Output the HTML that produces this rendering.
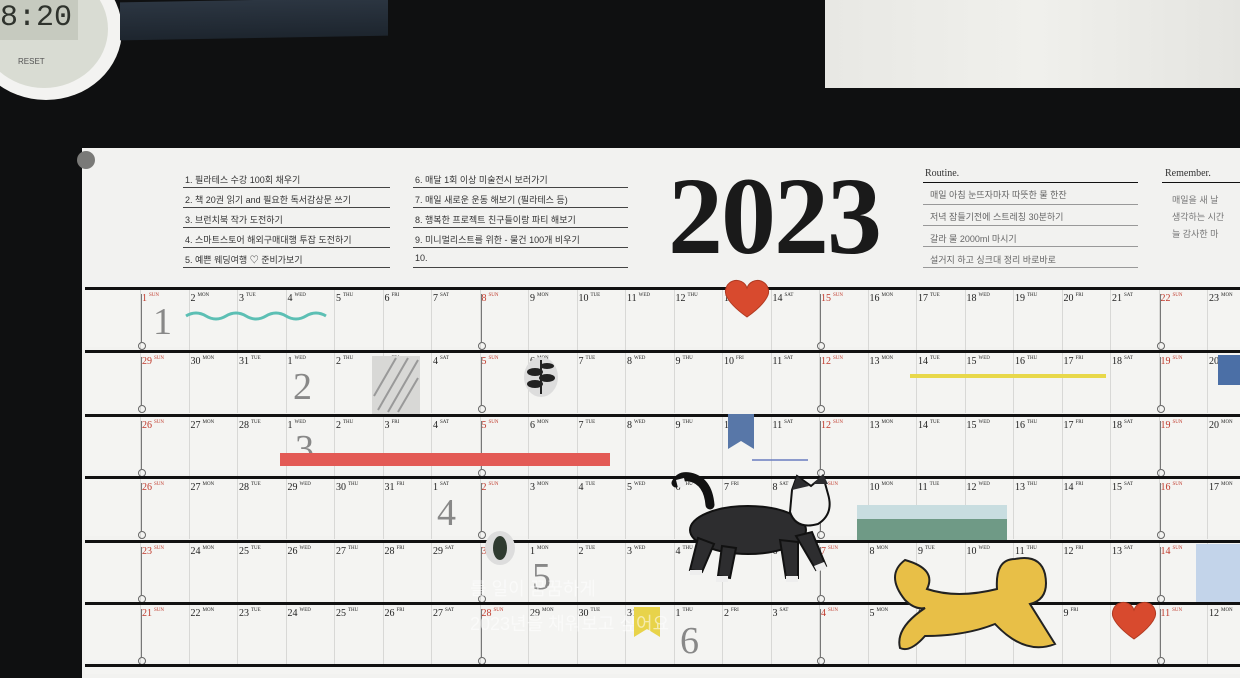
<!DOCTYPE html>
<html><head><meta charset="utf-8"><style>
*{margin:0;padding:0;box-sizing:border-box}
body{width:1240px;height:669px;background:#0f1011;overflow:hidden;position:relative;font-family:"Liberation Serif","Noto Serif CJK SC",serif}
.abs{position:absolute}
.paper{position:absolute;left:82px;top:148px;width:1180px;height:530px;background:#f2f2f0}
.row{position:absolute;left:85px;width:1160px;height:60px;background:#f4f4f2;border-top:3px solid #111}
.cells{position:absolute;left:55px;top:0;display:flex}
.cells i{font-style:normal;display:block;width:48.5px;height:60px;border-left:1px solid #d8d8d6;font-size:10px;color:#222;padding:3px 0 0 1px;position:relative}
.cells i b{font-size:5px;font-weight:normal;vertical-align:top;margin-left:2px}
.cells i.s{color:#c0392b}
.cells i.s:after{content:"";position:absolute;left:0;top:4px;width:1px;height:48px;background:#777}
.cells i.s:before{content:"";position:absolute;left:-3px;top:52px;width:6px;height:6px;border:1px solid #666;border-radius:50%}
.big{position:absolute;font-size:38px;color:#888;font-family:"Liberation Serif",serif}
.hl{position:absolute;height:1px;background:#444}
.ht{position:absolute;font-family:"Liberation Sans","Noto Sans CJK KR",sans-serif;font-size:9px;color:#333}
</style></head><body>
<!-- timer -->
<div class="abs" style="left:-30px;top:-40px;width:152px;height:140px;border-radius:50%;background:#f3f3f1"></div>
<div class="abs" style="left:-20px;top:-30px;width:128px;height:118px;border-radius:50%;background:#d9dcd3"></div>
<div class="abs" style="left:0;top:0;width:78px;height:40px;background:#c6cabf;font-family:'Liberation Mono',monospace;font-size:30px;color:#2f332d;line-height:36px">8:20</div>
<div class="abs" style="left:18px;top:57px;font-family:'Liberation Sans',sans-serif;font-size:8px;color:#555">RESET</div>
<!-- sea photo -->
<div class="abs" style="left:120px;top:0;width:268px;height:38px;background:linear-gradient(#2c3642,#1d252e);transform:skewY(-1deg)"></div>
<!-- towel -->
<div class="abs" style="left:825px;top:0;width:420px;height:88px;background:linear-gradient(90deg,#e8e8e4,#f0f0ec,#e4e4e0)"></div>
<div class="paper"></div>
<div class="abs" style="left:77px;top:151px;width:18px;height:18px;border-radius:50%;background:#7a7a78"></div>
<!-- header list -->
<div class="ht" style="left:185px;top:173px">1. 필라테스 수강 100회 채우기</div>
<div class="ht" style="left:185px;top:193px">2. 책 20권 읽기 and 필요한 독서감상문 쓰기</div>
<div class="ht" style="left:185px;top:213px">3. 브런치북 작가 도전하기</div>
<div class="ht" style="left:185px;top:233px">4. 스마트스토어 해외구매대행 투잡 도전하기</div>
<div class="ht" style="left:185px;top:253px">5. 예쁜 웨딩여행 ♡ 준비가보기</div>
<div class="ht" style="left:415px;top:173px">6. 매달 1회 이상 미술전시 보러가기</div>
<div class="ht" style="left:415px;top:193px">7. 매일 새로운 운동 해보기 (필라테스 등)</div>
<div class="ht" style="left:415px;top:213px">8. 행복한 프로젝트 친구들이랑 파티 해보기</div>
<div class="ht" style="left:415px;top:233px">9. 미니멀리스트를 위한 - 물건 100개 비우기</div>
<div class="ht" style="left:415px;top:253px">10.</div>
<div class="hl" style="left:183px;top:187px;width:207px"></div><div class="hl" style="left:183px;top:207px;width:207px"></div><div class="hl" style="left:183px;top:227px;width:207px"></div><div class="hl" style="left:183px;top:247px;width:207px"></div><div class="hl" style="left:183px;top:267px;width:207px"></div>
<div class="hl" style="left:413px;top:187px;width:215px"></div><div class="hl" style="left:413px;top:207px;width:215px"></div><div class="hl" style="left:413px;top:227px;width:215px"></div><div class="hl" style="left:413px;top:247px;width:215px"></div><div class="hl" style="left:413px;top:267px;width:215px"></div>
<div class="abs" style="left:668px;top:160px;font-size:110px;font-weight:bold;color:#1a1a1a;letter-spacing:-2px;line-height:112px">2023</div>
<div class="ht" style="left:925px;top:168px;font-family:'Liberation Serif',serif;font-size:10px">Routine.</div>
<div class="ht" style="left:1165px;top:168px;font-family:'Liberation Serif',serif;font-size:10px">Remember.</div>
<div class="hl" style="left:923px;top:182px;width:215px;background:#111"></div>
<div class="hl" style="left:1162px;top:182px;width:80px;background:#111"></div>
<div class="ht" style="left:930px;top:188px;color:#666">매일 아침 눈뜨자마자 따뜻한 물 한잔</div>
<div class="hl" style="left:923px;top:204px;width:215px;background:#999"></div>
<div class="ht" style="left:930px;top:210px;color:#666">저녁 잠들기전에 스트레칭 30분하기</div>
<div class="hl" style="left:923px;top:225px;width:215px;background:#999"></div>
<div class="ht" style="left:930px;top:232px;color:#666">갈라 물 2000ml 마시기</div>
<div class="hl" style="left:923px;top:246px;width:215px;background:#999"></div>
<div class="ht" style="left:930px;top:253px;color:#666">설거지 하고 싱크대 정리 바로바로</div>
<div class="hl" style="left:923px;top:267px;width:215px;background:#999"></div>
<div class="ht" style="left:1172px;top:192px;color:#777;line-height:17px">매일을 새 날<br>생각하는 시간<br>늘 감사한 마</div>

<div class="row" style="top:287px"><div class="cells"><i class="s">1<b>SUN</b></i><i>2<b>MON</b></i><i>3<b>TUE</b></i><i>4<b>WED</b></i><i>5<b>THU</b></i><i>6<b>FRI</b></i><i>7<b>SAT</b></i><i class="s">8<b>SUN</b></i><i>9<b>MON</b></i><i>10<b>TUE</b></i><i>11<b>WED</b></i><i>12<b>THU</b></i><i>13<b>FRI</b></i><i>14<b>SAT</b></i><i class="s">15<b>SUN</b></i><i>16<b>MON</b></i><i>17<b>TUE</b></i><i>18<b>WED</b></i><i>19<b>THU</b></i><i>20<b>FRI</b></i><i>21<b>SAT</b></i><i class="s">22<b>SUN</b></i><i>23<b>MON</b></i></div><div class="big" style="left:68px;top:10px">1</div></div>
<div class="row" style="top:350px"><div class="cells"><i class="s">29<b>SUN</b></i><i>30<b>MON</b></i><i>31<b>TUE</b></i><i>1<b>WED</b></i><i>2<b>THU</b></i><i>3<b>FRI</b></i><i>4<b>SAT</b></i><i class="s">5<b>SUN</b></i><i>6<b>MON</b></i><i>7<b>TUE</b></i><i>8<b>WED</b></i><i>9<b>THU</b></i><i>10<b>FRI</b></i><i>11<b>SAT</b></i><i class="s">12<b>SUN</b></i><i>13<b>MON</b></i><i>14<b>TUE</b></i><i>15<b>WED</b></i><i>16<b>THU</b></i><i>17<b>FRI</b></i><i>18<b>SAT</b></i><i class="s">19<b>SUN</b></i><i>20<b>MON</b></i></div><div class="big" style="left:208px;top:12px">2</div></div>
<div class="row" style="top:414px"><div class="cells"><i class="s">26<b>SUN</b></i><i>27<b>MON</b></i><i>28<b>TUE</b></i><i>1<b>WED</b></i><i>2<b>THU</b></i><i>3<b>FRI</b></i><i>4<b>SAT</b></i><i class="s">5<b>SUN</b></i><i>6<b>MON</b></i><i>7<b>TUE</b></i><i>8<b>WED</b></i><i>9<b>THU</b></i><i>10<b>FRI</b></i><i>11<b>SAT</b></i><i class="s">12<b>SUN</b></i><i>13<b>MON</b></i><i>14<b>TUE</b></i><i>15<b>WED</b></i><i>16<b>THU</b></i><i>17<b>FRI</b></i><i>18<b>SAT</b></i><i class="s">19<b>SUN</b></i><i>20<b>MON</b></i></div><div class="big" style="left:210px;top:10px">3</div></div>
<div class="row" style="top:476px"><div class="cells"><i class="s">26<b>SUN</b></i><i>27<b>MON</b></i><i>28<b>TUE</b></i><i>29<b>WED</b></i><i>30<b>THU</b></i><i>31<b>FRI</b></i><i>1<b>SAT</b></i><i class="s">2<b>SUN</b></i><i>3<b>MON</b></i><i>4<b>TUE</b></i><i>5<b>WED</b></i><i>6<b>THU</b></i><i>7<b>FRI</b></i><i>8<b>SAT</b></i><i class="s">9<b>SUN</b></i><i>10<b>MON</b></i><i>11<b>TUE</b></i><i>12<b>WED</b></i><i>13<b>THU</b></i><i>14<b>FRI</b></i><i>15<b>SAT</b></i><i class="s">16<b>SUN</b></i><i>17<b>MON</b></i></div><div class="big" style="left:352px;top:12px">4</div></div>
<div class="row" style="top:540px"><div class="cells"><i class="s">23<b>SUN</b></i><i>24<b>MON</b></i><i>25<b>TUE</b></i><i>26<b>WED</b></i><i>27<b>THU</b></i><i>28<b>FRI</b></i><i>29<b>SAT</b></i><i class="s">30<b>SUN</b></i><i>1<b>MON</b></i><i>2<b>TUE</b></i><i>3<b>WED</b></i><i>4<b>THU</b></i><i>5<b>FRI</b></i><i>6<b>SAT</b></i><i class="s">7<b>SUN</b></i><i>8<b>MON</b></i><i>9<b>TUE</b></i><i>10<b>WED</b></i><i>11<b>THU</b></i><i>12<b>FRI</b></i><i>13<b>SAT</b></i><i class="s">14<b>SUN</b></i><i>15<b>MON</b></i></div><div class="big" style="left:447px;top:12px">5</div></div>
<div class="row" style="top:602px"><div class="cells"><i class="s">21<b>SUN</b></i><i>22<b>MON</b></i><i>23<b>TUE</b></i><i>24<b>WED</b></i><i>25<b>THU</b></i><i>26<b>FRI</b></i><i>27<b>SAT</b></i><i class="s">28<b>SUN</b></i><i>29<b>MON</b></i><i>30<b>TUE</b></i><i>31<b>WED</b></i><i>1<b>THU</b></i><i>2<b>FRI</b></i><i>3<b>SAT</b></i><i class="s">4<b>SUN</b></i><i>5<b>MON</b></i><i>6<b>TUE</b></i><i>7<b>WED</b></i><i>8<b>THU</b></i><i>9<b>FRI</b></i><i>10<b>SAT</b></i><i class="s">11<b>SUN</b></i><i>12<b>MON</b></i></div><div class="big" style="left:595px;top:14px">6</div></div>
<div class="row" style="top:664px;height:10px"></div>

<!-- decorations -->
<svg class="abs" style="left:0;top:0" width="1240" height="669">
<path d="M186 316 q10 -6 20 0 t20 0 t20 0 t20 0 t20 0 t20 0 t20 0" stroke="#5cbfb4" stroke-width="3" fill="none"/>
<rect x="372" y="356" width="48" height="58" fill="#d8d8d6"/>
<path d="M378 410 l30 -52 M388 412 l30 -52 M374 396 l22 -38 M398 412 l20 -34" stroke="#999" stroke-width="2"/>
<ellipse cx="541" cy="377" rx="17" ry="20" fill="#ddd"/>
<path d="M541 360 l0 34" stroke="#222" stroke-width="2"/><ellipse cx="535" cy="372" rx="8" ry="4" fill="#222"/><ellipse cx="547" cy="378" rx="8" ry="4" fill="#222"/><ellipse cx="535" cy="384" rx="8" ry="4" fill="#222"/><ellipse cx="547" cy="366" rx="7" ry="3" fill="#222"/>
<rect x="910" y="374" width="196" height="4" fill="#e8d84a"/>
<rect x="1218" y="355" width="22" height="30" fill="#4b6fa6"/>
<rect x="280" y="453" width="330" height="13" fill="#e35a55"/>
<path d="M728 414 h26 v35 l-13 -8 l-13 8z" fill="#5877a8"/>
<path d="M752 460 h56" stroke="#6a7dc0" stroke-width="1.5"/>
<path d="M726 295 a11 11 0 0 1 21 -7 a11 11 0 0 1 21 7 q-4 10 -21 22 q-17 -12 -21 -22z" fill="#d84a2e" stroke="#b03a22"/>
<path d="M1113 617 a11 11 0 0 1 21 -7 a11 11 0 0 1 21 7 q-4 10 -21 22 q-17 -12 -21 -22z" fill="#d84a2e" stroke="#b03a22"/>
<rect x="857" y="505" width="150" height="35" fill="#6f9a86"/><rect x="857" y="505" width="150" height="14" fill="#c8dde0"/>
<ellipse cx="500" cy="548" rx="15" ry="17" fill="#ddd"/><ellipse cx="500" cy="548" rx="7" ry="12" fill="#2f3b30"/>
<path d="M634 607 h26 v30 l-13 -8 l-13 8z" fill="#e8d34a"/>
<rect x="1196" y="544" width="44" height="58" fill="#c3d4ea"/>
<!-- cat -->
<path d="M676 483 q4 -8 14 -6 q18 4 20 28" stroke="#111" stroke-width="9" fill="none" stroke-linecap="round"/>
<path d="M676 480 l8 -2 l2 8 l-8 2z" fill="#eee"/>
<ellipse cx="748" cy="530" rx="58" ry="24" fill="#2d2d2f" stroke="#111" stroke-width="2"/>
<path d="M698 538 l-8 32 l12 2 l12 -28z M722 546 l-4 30 l12 2 l6 -30z M780 540 l6 38 l12 0 l0 -36z M796 536 l20 34 l10 -4 l-14 -34z" fill="#2d2d2f" stroke="#111" stroke-width="2"/>
<path d="M690 570 h12 v5 h-12z M716 576 h12 v6 h-12z M786 576 h12 v6 h-12z M814 566 l10 -4 l3 6 l-10 4z" fill="#eee"/>
<path d="M792 490 l5 -14 l14 10 l12 -10 l5 18 q6 20 -10 30 q-22 6 -28 -12z" fill="#f2f2f0" stroke="#111" stroke-width="2"/>
<path d="M792 490 l5 -14 l12 10 z M828 484 l-5 -10 l-10 10z" fill="#2d2d2f"/>
<!-- dog -->
<path d="M905 560 q-20 15 0 40 q10 10 20 8 q-30 20 -25 40 q10 5 25 -12 q40 0 70 -12 q30 32 60 20 l-25 -40 q20 -5 15 -30 q-5 -20 -30 -15 q-20 0 -18 30 q-40 10 -70 0 q10 -20 -22 -29z" fill="#e8bf47" stroke="#222" stroke-width="2"/>
</svg>
<div class="ht" style="left:470px;top:575px;font-size:18px;color:rgba(255,255,255,.55)">를 일이 꿈꿈하게</div>
<div class="ht" style="left:470px;top:610px;font-size:18px;color:rgba(255,255,255,.55)">2023년을 채워보고 싶어요</div>
</body></html>
